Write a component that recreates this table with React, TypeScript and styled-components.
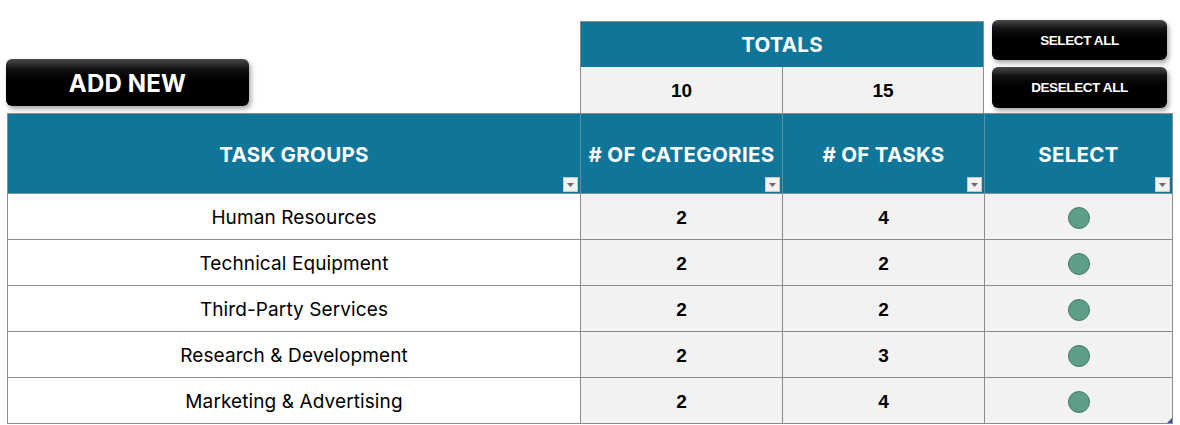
import React from "react";
import styled, { createGlobalStyle } from "styled-components";

const GlobalStyle = createGlobalStyle`
  html, body { margin: 0; padding: 0; background: #ffffff; }
  body { font-family: "Inter", "Liberation Sans", sans-serif; }
`;

const TEAL = "#0f7599";
const LINE = "#8c8c8c";

const Page = styled.div`
  width: 1180px;
  height: 425px;
  overflow: hidden;
  padding-left: 7px;
  box-sizing: border-box;
`;

const Grid = styled.div`
  position: relative;
  width: 1166px;
  display: grid;
  grid-template-columns: 573px 202px 202px 189px;
  grid-template-rows: 21px 46px 46px 81px repeat(5, 46px);
`;

const ButtonArea = styled.div`
  grid-column: 1;
  grid-row: 1 / span 3;
  display: flex;
  align-items: flex-end;
  padding: 0 0 7px 0;
  margin-left: -1px;
`;

const StackArea = styled.div`
  grid-column: 4;
  grid-row: 1 / span 3;
  display: flex;
  flex-direction: column;
  gap: 7px;
  padding: 20px 0 0 8px;
`;

const BlackButton = styled.button<{ $w: number; $h: number; $size: number }>`
  width: ${(p) => p.$w}px;
  height: ${(p) => p.$h}px;
  border: none;
  border-radius: 6px;
  background: linear-gradient(to bottom, #4a4a4a 0%, #111 22%, #000 45%, #000 100%);
  box-shadow: 2px 3px 5px rgba(0, 0, 0, 0.35);
  color: #ffffff;
  font-family: ${(p) => (p.$size > 16 ? `"Inter", "Liberation Sans", sans-serif` : `"Liberation Sans", Arial, sans-serif`)};
  font-weight: 700;
  font-size: ${(p) => p.$size}px;
  letter-spacing: ${(p) => (p.$size > 16 ? "0.2px" : "-0.4px")};
  padding: ${(p) => (p.$size > 16 ? "2px 0 0 0" : "0")};
  cursor: pointer;
`;

const TotalsHead = styled.div`
  grid-column: 2 / span 2;
  grid-row: 2;
  background: ${TEAL};
  border: 1px solid ${LINE};
  border-bottom: none;
  display: flex;
  align-items: center;
  justify-content: center;
  color: #fff;
  font-weight: 700;
  font-size: 20.5px;
  letter-spacing: 0.2px;
`;

const TotalCell = styled.div<{ $col: number }>`
  grid-column: ${(p) => p.$col};
  grid-row: 3;
  background: #f2f2f2;
  border-left: 1px solid ${LINE};
  border-right: ${(p) => (p.$col === 3 ? `1px solid ${LINE}` : "none")};
  display: flex;
  align-items: center;
  justify-content: center;
  padding-top: 2px;
  font-family: "Liberation Sans", Arial, sans-serif;
  font-weight: 700;
  font-size: 19px;
  color: #000;
`;

const HeadCell = styled.div<{ $col: number }>`
  position: relative;
  grid-column: ${(p) => p.$col};
  grid-row: 4;
  background: ${TEAL};
  border-left: 1px solid #5f8fa3;
  border-top: 1px solid ${LINE};
  border-bottom: 1px solid ${LINE};
  ${(p) => (p.$col === 4 ? `border-right: 1px solid ${LINE};` : "")}
  ${(p) => (p.$col === 1 ? `border-left: 1px solid ${LINE};` : "")}
  display: flex;
  align-items: center;
  justify-content: center;
  padding-top: 2px;
  color: #fff;
  font-weight: 700;
  font-size: 20.5px;
  letter-spacing: 0.3px;
  white-space: nowrap;
`;

const FilterBox = styled.span`
  position: absolute;
  right: 2px;
  bottom: 1px;
  width: 15px;
  height: 15px;
  box-sizing: border-box;
  background: #f3f3f3;
  border: 1px solid #c8c8c8;
  display: flex;
  align-items: center;
  justify-content: center;
`;

const Cell = styled.div<{ $col: number; $row: number; $shade?: boolean }>`
  grid-column: ${(p) => p.$col};
  grid-row: ${(p) => p.$row};
  background: ${(p) => (p.$shade ? "#f2f2f2" : "#ffffff")};
  border-left: 1px solid ${LINE};
  border-bottom: 1px solid ${LINE};
  ${(p) => (p.$col === 4 ? `border-right: 1px solid ${LINE};` : "")}
  display: flex;
  align-items: center;
  justify-content: center;
  color: #000;
`;

const GroupName = styled.span`
  font-family: "Inter", "Liberation Sans", sans-serif;
  font-size: 19px;
  letter-spacing: 0.1px;
  padding-top: 1px;
`;

const Count = styled.span`
  font-family: "Liberation Sans", Arial, sans-serif;
  font-weight: 700;
  font-size: 19px;
  padding-top: 2px;
`;

const Dot = styled.span`
  width: 22px;
  height: 22px;
  box-sizing: border-box;
  border-radius: 50%;
  background: #5f9e86;
  border: 1px solid #3f7a63;
  margin-top: 2px;
`;

const ResizeHandle = styled.span`
  position: absolute;
  right: 1px;
  bottom: 1px;
  width: 0;
  height: 0;
  border-left: 5px solid transparent;
  border-bottom: 5px solid #3b4fa8;
`;

const Triangle = () => (
  <svg width="7" height="4" viewBox="0 0 7 4">
    <path d="M0 0 L7 0 L3.5 4 Z" fill="#6b6b6b" />
  </svg>
);

const rows = [
  { name: "Human Resources", cats: 2, tasks: 4 },
  { name: "Technical Equipment", cats: 2, tasks: 2 },
  { name: "Third-Party Services", cats: 2, tasks: 2 },
  { name: "Research & Development", cats: 2, tasks: 3 },
  { name: "Marketing & Advertising", cats: 2, tasks: 4 },
];

const headers = ["TASK GROUPS", "# OF CATEGORIES", "# OF TASKS", "SELECT"];

export default function App() {
  return (
    <Page>
      <GlobalStyle />
      <Grid>
        <ButtonArea>
          <BlackButton $w={243} $h={47} $size={24}>ADD NEW</BlackButton>
        </ButtonArea>
        <TotalsHead>TOTALS</TotalsHead>
        <TotalCell $col={2}>10</TotalCell>
        <TotalCell $col={3}>15</TotalCell>
        <StackArea>
          <BlackButton $w={175} $h={40} $size={13.5}>SELECT ALL</BlackButton>
          <BlackButton $w={175} $h={41} $size={13.5}>DESELECT ALL</BlackButton>
        </StackArea>
        {headers.map((h, i) => (
          <HeadCell key={h} $col={i + 1}>
            {h}
            <FilterBox>
              <Triangle />
            </FilterBox>
          </HeadCell>
        ))}
        {rows.map((r, i) => (
          <React.Fragment key={r.name}>
            <Cell $col={1} $row={5 + i}>
              <GroupName>{r.name}</GroupName>
            </Cell>
            <Cell $col={2} $row={5 + i} $shade>
              <Count>{r.cats}</Count>
            </Cell>
            <Cell $col={3} $row={5 + i} $shade>
              <Count>{r.tasks}</Count>
            </Cell>
            <Cell $col={4} $row={5 + i} $shade>
              <Dot />
            </Cell>
          </React.Fragment>
        ))}
        <ResizeHandle />
      </Grid>
    </Page>
  );
}
